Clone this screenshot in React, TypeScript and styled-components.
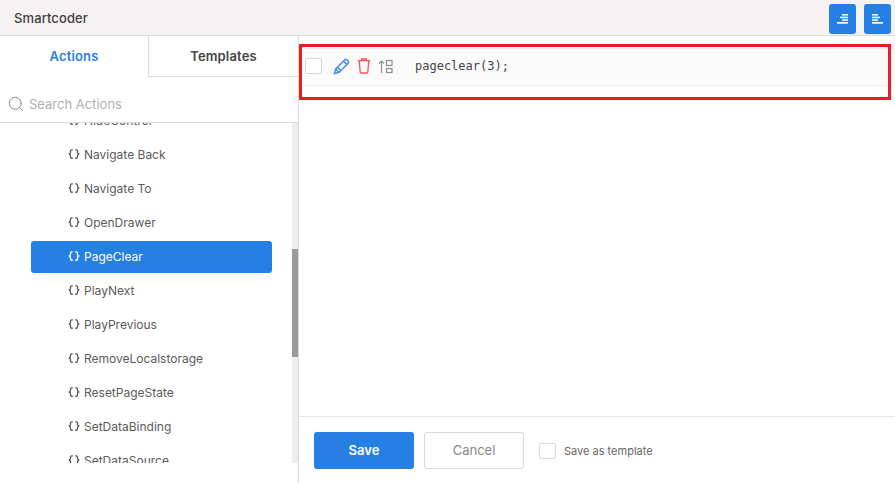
import styled, { createGlobalStyle } from 'styled-components';
import { Search } from 'lucide-react';

const GlobalStyle = createGlobalStyle`
	html, body {
		margin: 0;
		padding: 0;
		background: #fff;
		font-family: Inter, 'Liberation Sans', sans-serif;
		overflow: hidden;
	}
	* {
		box-sizing: border-box;
	}
`;

const actions = [
	'HideControl',
	'Navigate Back',
	'Navigate To',
	'OpenDrawer',
	'PageClear',
	'PlayNext',
	'PlayPrevious',
	'RemoveLocalstorage',
	'ResetPageState',
	'SetDataBinding',
	'SetDataSource',
];

const BraceIcon = () => (
	<svg width='12' height='12' viewBox='0 0 12 12' fill='none' stroke='currentColor' strokeWidth='1.35'>
		<path d='M4.8 1.8H3.6C2.8 1.8 2.5 2.2 2.5 2.9V4.6C2.5 5.3 2 5.8 0.8 6C2 6.2 2.5 6.7 2.5 7.4V9.1C2.5 9.8 2.8 10.2 3.6 10.2H4.8' />
		<path d='M7.2 1.8H8.4C9.2 1.8 9.5 2.2 9.5 2.9V4.6C9.5 5.3 10 5.8 11.2 6C10 6.2 9.5 6.7 9.5 7.4V9.1C9.5 9.8 9.2 10.2 8.4 10.2H7.2' />
	</svg>
);

const App = () => {
	return (
		<Page>
			<GlobalStyle />
			<Header>
				<Title>Smartcoder</Title>
				<HeaderActions>
					<IconButton aria-label='Indent'>
						<svg width='11' height='10' viewBox='0 0 11 10' fill='#fff'>
							<rect x='5' y='0' width='6' height='1.5' />
							<rect x='3' y='2.7' width='8' height='1.5' />
							<rect x='5' y='5.3' width='6' height='1.5' />
							<rect x='0' y='8' width='11' height='1.7' />
						</svg>
					</IconButton>
					<IconButton aria-label='Outdent'>
						<svg width='11' height='10' viewBox='0 0 11 10' fill='#fff'>
							<rect x='0' y='0' width='6' height='1.5' />
							<rect x='0' y='2.7' width='8' height='1.5' />
							<rect x='0' y='5.3' width='6' height='1.5' />
							<rect x='0' y='8' width='11' height='1.7' />
						</svg>
					</IconButton>
				</HeaderActions>
			</Header>
			<Body>
				<Sidebar>
					<Tabs>
						<Tab $active>Actions</Tab>
						<Tab>Templates</Tab>
					</Tabs>
					<SearchRow>
						<Search size={18} color='#8a8a8a' strokeWidth={1.3} />
						<SearchInput placeholder='Search Actions' />
					</SearchRow>
					<ListArea>
						<ActionList>
							{actions.map((name) => (
								<ActionItem key={name} $selected={name === 'PageClear'}>
									<BraceIcon />
									{name}
								</ActionItem>
							))}
						</ActionList>
						<ScrollTrack>
							<ScrollThumb />
						</ScrollTrack>
					</ListArea>
				</Sidebar>
				<Main>
					<Editor>
						<CodeRow>
							<Check />
							<RowIcons>
								<svg width='17' height='17' viewBox='0 0 17 17' fill='none' stroke='#3a8ce8' strokeWidth='1.4'>
									<path d='M1.5 15.5L2.6 11L11.8 1.8C12.4 1.2 13.2 1.2 13.8 1.8L15.2 3.2C15.8 3.8 15.8 4.6 15.2 5.2L6 14.4L1.5 15.5Z' />
									<path d='M10.5 3.2L13.8 6.5M2.6 11L6 14.4M4.5 9.2L7.8 12.5' />
								</svg>
								<svg width='14' height='16' viewBox='0 0 14 16' fill='none' stroke='#f4555c' strokeWidth='1.3'>
									<path d='M0.8 2.6H13.2M4.6 2.6V1H9.4V2.6' />
									<path d='M2.2 2.6L3.2 14C3.3 14.7 3.6 15 4.2 15H9.8C10.4 15 10.7 14.7 10.8 14L11.8 2.6' />
								</svg>
								<svg width='15' height='15' viewBox='0 0 15 15' fill='none' stroke='#8f8f8f' strokeWidth='1.2'>
									<path d='M3.5 14V2M1 4.5L3.5 2L6 4.5' />
									<rect x='8.5' y='1.5' width='5.5' height='5' />
									<rect x='8.5' y='9.5' width='5.5' height='4' />
								</svg>
							</RowIcons>
							<Code>pageclear(3);</Code>
						</CodeRow>
						<Highlight />
					</Editor>
					<Footer>
						<SaveButton>Save</SaveButton>
						<CancelButton>Cancel</CancelButton>
						<TemplateCheck>
							<Check />
							Save as template
						</TemplateCheck>
					</Footer>
				</Main>
			</Body>
		</Page>
	);
};

export default App;

const Page = styled.div`
	display: flex;
	flex-direction: column;
	width: 895px;
	height: 483px;
	color: #444;
`;

const Header = styled.header`
	display: flex;
	align-items: center;
	justify-content: space-between;
	flex: none;
	height: 36px;
	padding: 0 4px 0 14px;
	background: #f6f2f3;
	border-bottom: 1px solid #dcdcdc;
`;

const Title = styled.div`
	font-size: 13px;
	font-weight: 500;
	color: #3f3f3f;
	letter-spacing: 0.1px;
`;

const HeaderActions = styled.div`
	display: flex;
	gap: 8px;
	margin-top: 2px;
`;

const IconButton = styled.button`
	display: flex;
	align-items: center;
	justify-content: center;
	width: 27px;
	height: 30px;
	padding: 0;
	border: none;
	border-radius: 3px;
	background: #2680e3;
`;

const Body = styled.div`
	display: flex;
	flex: 1;
	min-height: 0;
`;

const Sidebar = styled.aside`
	display: flex;
	flex-direction: column;
	flex: none;
	width: 299px;
	border-right: 1px solid #dcdcdc;
`;

const Tabs = styled.div`
	display: flex;
	flex: none;
	height: 41px;
`;

const Tab = styled.div<{ $active?: boolean }>`
	display: flex;
	align-items: center;
	justify-content: center;
	width: ${({ $active }) => ($active ? '148px' : '150px')};
	padding-bottom: 1px;
	font-size: 13px;
	font-weight: 600;
	letter-spacing: 0.15px;
	color: ${({ $active }) => ($active ? '#2680e3' : '#444')};
	border-bottom: ${({ $active }) => ($active ? 'none' : '1px solid #dcdcdc')};
	border-left: ${({ $active }) => ($active ? 'none' : '1px solid #dcdcdc')};
`;

const SearchRow = styled.div`
	display: flex;
	align-items: center;
	gap: 4px;
	flex: none;
	height: 46px;
	padding: 9px 0 0 7px;
	border-bottom: 1px solid #dcdcdc;
`;

const SearchInput = styled.input`
	flex: 1;
	min-width: 0;
	border: none;
	outline: none;
	padding: 0;
	font-family: inherit;
	font-size: 13px;
	background: transparent;

	&::placeholder {
		color: #b0b0b0;
		opacity: 1;
	}
`;

const ListArea = styled.div`
	display: flex;
	flex: none;
	height: 340px;
	overflow: hidden;
`;

const ActionList = styled.div`
	display: flex;
	flex-direction: column;
	align-items: center;
	gap: 2px;
	flex: 1;
	margin-top: -18px;
`;

const ActionItem = styled.div<{ $selected?: boolean }>`
	display: flex;
	align-items: center;
	gap: 4px;
	flex: none;
	width: 241px;
	height: 32px;
	margin-left: 11px;
	padding: 0 0 2px 37px;
	font-size: 12px;
	border-radius: 3px;
	color: ${({ $selected }) => ($selected ? '#fff' : '#5a5a5a')};
	background: ${({ $selected }) => ($selected ? '#2680e3' : 'transparent')};
`;

const ScrollTrack = styled.div`
	flex: none;
	width: 6px;
	height: 340px;
	padding-top: 126px;
	background: #eeeeee;
`;

const ScrollThumb = styled.div`
	height: 108px;
	background: #9a9a9a;
`;

const Main = styled.main`
	display: flex;
	flex-direction: column;
	flex: 1;
	min-width: 0;
`;

const Editor = styled.div`
	position: relative;
	flex: 1;
	padding-top: 12px;
`;

const CodeRow = styled.div`
	display: flex;
	align-items: center;
	height: 38px;
	padding: 0 0 2px 6px;
	background: #fafafa;
	border-top: 1px solid #eeeeee;
	border-bottom: 1px solid #eeeeee;
`;

const Check = styled.span`
	display: inline-block;
	flex: none;
	width: 17px;
	height: 16px;
	background: #fff;
	border: 1px solid #d8d8d8;
	border-radius: 2px;
`;

const RowIcons = styled.div`
	display: flex;
	align-items: center;
	gap: 7px;
	margin-left: 11px;
`;

const Code = styled.code`
	margin-left: 22px;
	font-family: 'DejaVu Sans Mono', 'Liberation Mono', monospace;
	font-size: 12px;
	color: #444;
`;

const Highlight = styled.div`
	position: absolute;
	top: 8px;
	left: 0;
	width: 592px;
	height: 56px;
	border: 3px solid #ed1c24;
	pointer-events: none;
`;

const Footer = styled.footer`
	display: flex;
	align-items: center;
	flex: none;
	height: 67px;
	padding-left: 15px;
	border-top: 1px solid #e4e4e4;
`;

const SaveButton = styled.button`
	width: 100px;
	height: 37px;
	border: none;
	border-radius: 3px;
	font-family: inherit;
	font-size: 13px;
	font-weight: 600;
	color: #fff;
	background: #2680e3;
`;

const CancelButton = styled.button`
	width: 100px;
	height: 37px;
	margin-left: 10px;
	border: 1px solid #d8d8d8;
	border-radius: 3px;
	font-family: inherit;
	font-size: 13px;
	color: #888;
	background: #fff;
`;

const TemplateCheck = styled.label`
	display: flex;
	align-items: center;
	gap: 8px;
	margin: 1px 0 0 15px;
	font-size: 11px;
	color: #666;
`;
